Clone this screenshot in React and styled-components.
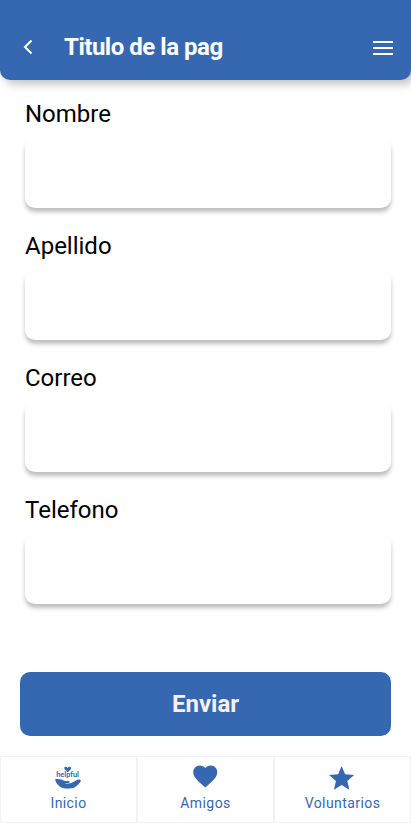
import React from 'react';
import styled, { createGlobalStyle } from 'styled-components';

const blue = '#3568b1';

const GlobalStyle = createGlobalStyle`
  * { box-sizing: border-box; }
  body { margin: 0; background: #fff; font-family: Roboto, sans-serif; }
`;

const Screen = styled.div`
  width: 411px;
  height: 823px;
  display: flex;
  flex-direction: column;
  overflow: hidden;
  background: #fff;
`;

const Header = styled.header`
  height: 80px;
  flex: none;
  display: flex;
  align-items: center;
  padding: 14px 18px 0 22px;
  background: ${blue};
  border-radius: 0 0 10px 10px;
  box-shadow: 4px 4px 10px rgba(0, 0, 0, 0.25);
`;

const IconButton = styled.button`
  display: flex;
  padding: ${(p) => p.$padding || 0};
  border: 0;
  background: none;
`;

const Title = styled.h1`
  flex: 1;
  margin: 0 0 0 30px;
  color: #fff;
  font-size: 24px;
  line-height: 28px;
  font-weight: 700;
  letter-spacing: -0.48px;
`;

const Form = styled.form`
  flex: 1;
  display: flex;
  flex-direction: column;
  padding: 20px;
`;

const Field = styled.label`
  display: flex;
  flex-direction: column;
  gap: 10px;
  height: 108px;
  margin: 0 0 24px 5px;
  color: #000;
  font-size: 24px;
  line-height: 28px;
`;

const Input = styled.input`
  width: 366px;
  height: 70px;
  padding: 0 16px;
  border: 0;
  outline: 0;
  border-radius: 10px;
  background: #fff;
  box-shadow: 0 4px 4px rgba(0, 0, 0, 0.25);
  font: inherit;
`;

const Submit = styled.button`
  height: 64px;
  margin-top: auto;
  border: 0;
  border-radius: 10px;
  background: ${blue};
  color: #f2f2f2;
  font: 700 24px/28px Roboto, sans-serif;
`;

const Nav = styled.nav`
  flex: none;
  height: 67px;
  display: grid;
  grid-template-columns: repeat(3, 1fr);
`;

const Tab = styled.a`
  display: flex;
  flex-direction: column;
  align-items: center;
  padding-top: 5px;
  border: 1px solid #f2f2f2;
  color: ${blue};
  font-size: 14px;
  line-height: 16px;
  letter-spacing: 0.42px;
  svg { display: block; margin-bottom: 3px; }
`;

const BrandWord = styled.text`
  font: 600 7.2px Roboto, sans-serif;
  letter-spacing: 0;
`;

const HelpfulIcon = () => (
  <svg width="30" height="30" viewBox="0 0 30 30" fill="currentColor">
    <path d="M13.7 10.2 10.8 7.4C9.6 6.1 10.4 4.8 11.7 4.8c.9 0 1.6.4 2 1.1.4-.7 1.1-1.1 2-1.1 1.3 0 2.1 1.3 1 2.6Z" />
    <BrandWord x="2.2" y="15.3" textLength="22.8" lengthAdjust="spacingAndGlyphs">helpful</BrandWord>
    <path d="M1.2 17.1c3.5 0 5.7.1 7.7 1.2 1.6.9 3.1.7 5.3.8 1.5.1 2 1.2.8 1.6-1.2.4-3.3.3-4.6.3 2 .7 4.8.8 6.8.1 2.1-.8 3.9-2.1 5.6-3 1.9-1 4.4-.5 4 1-.4 1.4-3.8 5.2-6.3 6.3-2.9 1.3-7.3 1.3-10.9.8-3.4-.4-8.3-4.6-8.4-9.1Z" />
  </svg>
);

const HeartIcon = () => (
  <svg width="30" height="30" viewBox="0 0 25 25" fill="currentColor">
    <path transform="translate(-.6 0)" d="m12.5 21.35-1.45-1.32C5.9 15.36 2.5 12.28 2.5 8.5 2.5 5.42 4.92 3 8 3c1.74 0 3.41.81 4.5 2.09C13.59 3.81 15.26 3 17 3c3.08 0 5.5 2.42 5.5 5.5 0 3.78-3.4 6.86-8.55 11.54Z" />
  </svg>
);

const StarIcon = () => (
  <svg width="30" height="30" viewBox="0 0 24 24" fill="currentColor">
    <path d="M12 17.27 18.18 21l-1.64-7.03L22 9.24l-7.19-.61L12 2 9.19 8.63 2 9.24l5.46 4.73L5.82 21z" transform="translate(-1.1 1.2)" />
  </svg>
);

const fields = ['Nombre', 'Apellido', 'Correo', 'Telefono'];

export default function App() {
  return (
    <Screen>
      <GlobalStyle />
      <Header>
        <IconButton aria-label="Volver">
          <svg width="12" height="16" viewBox="0 0 12 16" fill="none" stroke="#fff" strokeWidth="2">
            <path d="M9.5 1.5 3 8l6.5 6.5" />
          </svg>
        </IconButton>
        <Title>Titulo de la pag</Title>
        <IconButton aria-label="Menu" $padding="2px 0 0">
          <svg width="20" height="14" viewBox="0 0 20 14" fill="#fff">
            <path d="M0 0h20v2H0zM0 6h20v2H0zM0 12h20v2H0z" />
          </svg>
        </IconButton>
      </Header>
      <Form>
        {fields.map((name) => (
          <Field key={name}>
            {name}
            <Input type="text" />
          </Field>
        ))}
        <Submit type="button">Enviar</Submit>
      </Form>
      <Nav>
        <Tab><HelpfulIcon />Inicio</Tab>
        <Tab><HeartIcon />Amigos</Tab>
        <Tab><StarIcon />Voluntarios</Tab>
      </Nav>
    </Screen>
  );
}
